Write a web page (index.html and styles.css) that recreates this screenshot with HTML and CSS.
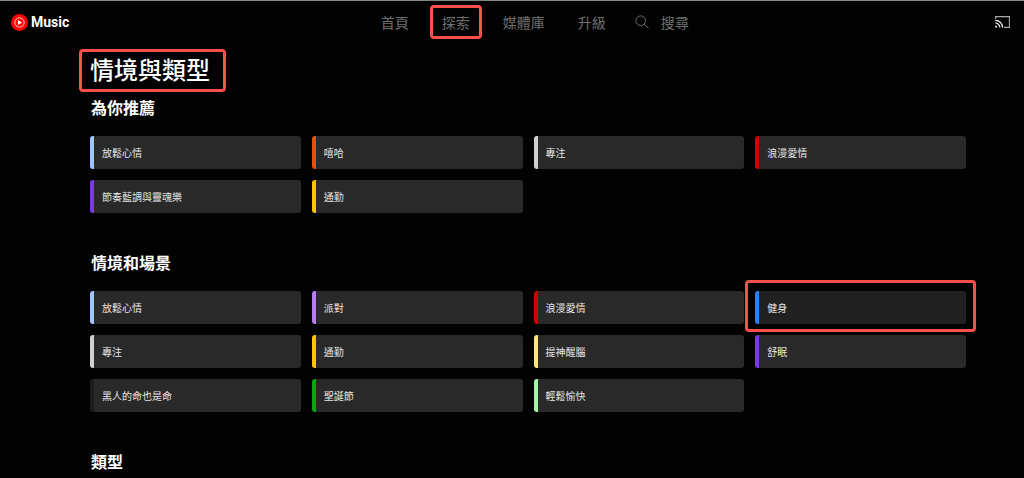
FILE: index.html
```html
<!DOCTYPE html>
<html lang="zh-Hant">

<head>
    <meta charset="UTF-8">
    <meta name="viewport" content="width=device-width, initial-scale=1.0">
    <title>Music</title>
    <link rel="stylesheet" href="styles.css">
</head>

<body>

    <header class="navbar">
        <a class="logo" href="#">
            <svg class="logo-icon" viewBox="0 0 24 24" aria-hidden="true">
                <circle cx="12" cy="12" r="12" fill="#f00"/>
                <circle cx="12" cy="12" r="6.6" fill="none" stroke="#fff" stroke-width="1.2"/>
                <path d="M9.8 8.4v7.2l6-3.6z" fill="#fff"/>
            </svg>
            <span>Music</span>
        </a>
        <nav class="nav-links">
            <a href="#">首頁</a>
            <a class="marked" href="#">探索</a>
            <a href="#">媒體庫</a>
            <a href="#">升級</a>
            <a class="search-link" href="#">
                <svg class="search-icon" viewBox="0 0 14 14" fill="none" stroke="currentColor" aria-hidden="true">
                    <circle cx="5.7" cy="5.7" r="4.8"/>
                    <path d="M9.2 9.2l4.2 4.2"/>
                </svg>
                <span>搜尋</span>
            </a>
        </nav>
        <button class="cast-btn" type="button" aria-label="投放">
            <svg class="cast-icon" viewBox="0 0 15 12" fill="none" aria-hidden="true">
                <path d="M.6 3V.6h13.8v10.8H9" stroke="#aaa" stroke-width="1.1"/>
                <path d="M.3 4.3a7.2 7.2 0 0 1 7.2 7.2M.3 7a4.5 4.5 0 0 1 4.5 4.5" stroke="#fff" stroke-width="1.2"/>
                <path d="M.3 9.5v2h2a2 2 0 0 0-2-2z" fill="#fff"/>
            </svg>
        </button>
    </header>

    <main class="content">
        <h1 class="marked">情境與類型</h1>

        <section class="category">
            <h2>為你推薦</h2>
            <div class="card-grid">
                <button type="button" class="card light-blue">放鬆心情</button>
                <button type="button" class="card orange">嘻哈</button>
                <button type="button" class="card gray">專注</button>
                <button type="button" class="card red">浪漫愛情</button>
                <button type="button" class="card purple">節奏藍調與靈魂樂</button>
                <button type="button" class="card yellow">通勤</button>
            </div>
        </section>

        <section class="category">
            <h2>情境和場景</h2>
            <div class="card-grid">
                <button type="button" class="card light-blue">放鬆心情</button>
                <button type="button" class="card violet">派對</button>
                <button type="button" class="card red">浪漫愛情</button>
                <button type="button" class="card blue active marked">健身</button>
                <button type="button" class="card gray">專注</button>
                <button type="button" class="card yellow">通勤</button>
                <button type="button" class="card cream">提神醒腦</button>
                <button type="button" class="card purple">舒眠</button>
                <button type="button" class="card dark">黑人的命也是命</button>
                <button type="button" class="card green">聖誕節</button>
                <button type="button" class="card mint">輕鬆愉快</button>
            </div>
        </section>

        <section class="category">
            <h2>類型</h2>
        </section>
    </main>

</body>

</html>
```
FILE: styles.css
```css
:root {
    --bg-color: #020202;
    --card-color: #292929;
    --text-color: #fff;
    --nav-color: #6e6e6e;
    --mark-color: #fa4f4b;
}

* {
    box-sizing: border-box;
}

body {
    margin: 0;
    font-family: "Noto Sans CJK TC", sans-serif;
    background-color: var(--bg-color);
    color: var(--text-color);
}

a {
    color: inherit;
    text-decoration: none;
}

.navbar {
    display: flex;
    align-items: center;
    justify-content: space-between;
    height: 43px;
    padding: 0 14px 0 11px;
    border-top: 1px solid #858585;
}

.logo {
    display: flex;
    align-items: center;
    gap: 3px;
    margin-right: 5px;
    font-family: Roboto, sans-serif;
    font-size: 14px;
    font-weight: bold;
}

.logo-icon {
    width: 17px;
    height: 17px;
}

.nav-links {
    display: flex;
    align-items: center;
    gap: 33px;
    font-size: 14px;
    line-height: 18px;
    color: var(--nav-color);
}

.search-link {
    display: flex;
    align-items: center;
    gap: 12px;
    margin-left: -4px;
}

.search-icon {
    width: 14px;
    height: 14px;
}

.cast-btn {
    display: flex;
    padding: 0;
    border: none;
    background: none;
    cursor: pointer;
}

.cast-icon {
    width: 15px;
    height: 12px;
}

.content {
    padding: 10px 58px 0 90px;
}

h1 {
    width: fit-content;
    margin: 0 0 10px;
    font-size: 24px;
    font-weight: 500;
    line-height: 32px;
}

h2 {
    margin: 0 0 17px;
    padding-left: 1px;
    font-size: 16px;
    font-weight: 700;
    line-height: 24px;
}

.category {
    margin-bottom: 37px;
}

.category:last-child {
    margin-bottom: 0;
}

.card-grid {
    display: grid;
    grid-template-columns: repeat(4, 1fr);
    gap: 11px;
}

.card {
    height: 33px;
    padding: 0 8px;
    border: none;
    border-left: 4px solid;
    border-radius: 3px;
    background-color: var(--card-color);
    color: #e6e6e6;
    font-family: inherit;
    font-size: 10px;
    text-align: left;
    cursor: pointer;
}

.card.active {
    background-color: #212121;
}

/* stripe colours */
.light-blue { border-left-color: #a1c4fe; }
.orange { border-left-color: #e65000; }
.gray { border-left-color: #d0d0d0; }
.red { border-left-color: #d00000; }
.purple { border-left-color: #7c3be0; }
.yellow { border-left-color: #ffc400; }
.violet { border-left-color: #b57bfa; }
.blue { border-left-color: #2e7dfa; }
.cream { border-left-color: #ffe57e; }
.dark { border-left-color: #1c1c1c; }
.green { border-left-color: #06a512; }
.mint { border-left-color: #a5f7a5; }

/* red frames around the highlighted items */
.marked {
    position: relative;
}

.marked::after {
    content: "";
    position: absolute;
    inset: -8px -12px;
    border: 3px solid var(--mark-color);
    border-radius: 4px;
    pointer-events: none;
}

h1.marked::after {
    inset: -4px -16px -7px -11px;
}

.card.marked::after {
    inset: -11px -10px -8px -14px;
}
```
